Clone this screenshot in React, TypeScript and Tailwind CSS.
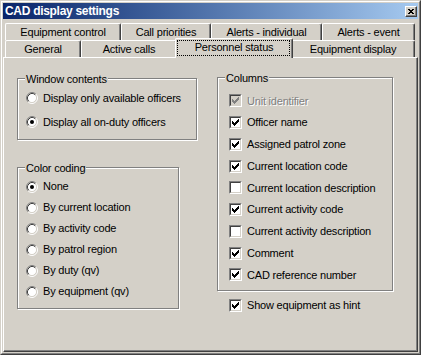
import React from "react";

function Radio({ checked }: { checked?: boolean }) {
  return (
    <svg width="12" height="12" viewBox="0 0 12 12" className="shrink-0">
      <circle cx="6" cy="6" r="4.5" fill="white" />
      <path d="M2.11 9.89 A5.5 5.5 0 0 1 9.89 2.11" fill="none" stroke="#808080" strokeWidth="1" />
      <path d="M9.89 2.11 A5.5 5.5 0 0 1 2.11 9.89" fill="none" stroke="#ffffff" strokeWidth="1" />
      <path d="M2.82 9.18 A4.5 4.5 0 0 1 9.18 2.82" fill="none" stroke="#404040" strokeWidth="1" />
      <path d="M9.18 2.82 A4.5 4.5 0 0 1 2.82 9.18" fill="none" stroke="#D4D0C8" strokeWidth="1" />
      {checked && <circle cx="6" cy="6" r="2" fill="black" />}
    </svg>
  );
}

function CheckMark({ color }: { color: string }) {
  return (
    <svg width="7" height="7" viewBox="0 0 7 7" className="absolute left-[1px] top-[1px]" shapeRendering="crispEdges">
      <path
        d="M0 2h1v3H0z M1 3h1v3H1z M2 4h1v3H2z M3 3h1v3H3z M4 2h1v3H4z M5 1h1v3H5z M6 0h1v3H6z"
        fill={color}
      />
    </svg>
  );
}

function Check({ checked, disabled }: { checked?: boolean; disabled?: boolean }) {
  return (
    <div className="w-[13px] h-[13px] shrink-0 border border-t-[#808080] border-l-[#808080] border-r-white border-b-white">
      <div
        className={
          disabled
            ? "relative w-full h-full border border-t-[#404040] border-l-[#404040] border-r-[#D4D0C8] border-b-[#D4D0C8] bg-[#D4D0C8]"
            : "relative w-full h-full border border-t-[#404040] border-l-[#404040] border-r-[#D4D0C8] border-b-[#D4D0C8] bg-white"
        }
      >
        {checked && <CheckMark color={disabled ? "#808080" : "#000000"} />}
      </div>
    </div>
  );
}

function Group({
  label,
  className,
  children,
}: {
  label: string;
  className: string;
  children: React.ReactNode;
}) {
  return (
    <div
      className={
        "relative border border-[#808080] shadow-[inset_1px_1px_0_white,1px_1px_0_white] " + className
      }
    >
      <span className="absolute left-[7px] top-[-6px] px-[1px] bg-[#D4D0C8] leading-[13px] whitespace-nowrap">
        {label}
      </span>
      {children}
    </div>
  );
}

function Tab({ label, className }: { label: string; className: string }) {
  return (
    <div
      className={
        "h-full flex items-center justify-center rounded-t-[2px] border-l border-t border-r border-l-white border-t-white border-r-[#404040] shadow-[inset_-1px_0_0_#808080] whitespace-nowrap leading-[13px] " +
        className
      }
    >
      {label}
    </div>
  );
}

const radiosTop = ["Display only available officers", "Display all on-duty officers"];
const colorCoding = [
  "None",
  "By current location",
  "By activity code",
  "By patrol region",
  "By duty (qv)",
  "By equipment (qv)",
];
const columns: { label: string; checked: boolean; disabled?: boolean }[] = [
  { label: "Unit identifier", checked: true, disabled: true },
  { label: "Officer name", checked: true },
  { label: "Assigned patrol zone", checked: true },
  { label: "Current location code", checked: true },
  { label: "Current location description", checked: false },
  { label: "Current activity code", checked: true },
  { label: "Current activity description", checked: false },
  { label: "Comment", checked: true },
  { label: "CAD reference number", checked: true },
];

export default function App() {
  return (
    <div className="w-[421px] h-[355px] bg-[#D4D0C8] border border-t-[#D4D0C8] border-l-[#D4D0C8] border-r-[#404040] border-b-[#404040] font-['Liberation_Sans',Arial,sans-serif] text-[11px] tracking-[-0.2px] text-black select-none">
      <div className="h-full flex flex-col p-[1px] border border-t-white border-l-white border-r-[#808080] border-b-[#808080]">
        {/* Title bar */}
        <div className="h-[16px] shrink-0 flex items-center justify-between bg-linear-to-r from-[#0A246A] to-[#A6CAF0]">
          <span className="pl-[2px] text-white font-bold text-[12px] tracking-[-0.3px] leading-[16px]">
            CAD display settings
          </span>
          <div className="mr-[1px] w-[12px] h-[11px] bg-[#D4D0C8] border border-t-white border-l-white border-r-[#404040] border-b-[#404040] shadow-[inset_-1px_-1px_0_#808080] flex items-center justify-center">
            <svg width="6" height="5" viewBox="0 0 6 5" shapeRendering="crispEdges">
              <path d="M0 0h2v1H0z M4 0h2v1H4z M1 1h2v1H1z M3 1h2v1H3z M2 2h2v1H2z M1 3h2v1H1z M3 3h2v1H3z M0 4h2v1H0z M4 4h2v1H4z" fill="black" />
            </svg>
          </div>
        </div>

        {/* Tab rows */}
        <div className="mt-[4px] h-[17px] shrink-0 flex pl-[2px]">
          <Tab label="Equipment control" className="w-[116px]" />
          <Tab label="Call priorities" className="w-[90px]" />
          <Tab label="Alerts - individual" className="w-[111px]" />
          <Tab label="Alerts - event" className="w-[93px]" />
        </div>
        <div className="h-[17px] shrink-0 flex items-end pl-[2px] relative z-10">
          <Tab label="General" className="w-[76px]" />
          <Tab label="Active calls" className="w-[96px]" />
          <div className="relative z-10 w-[118px] h-[20px] -mx-[2px] mb-[-1px] bg-[#D4D0C8] rounded-t-[2px] border-l border-t border-r border-l-white border-t-white border-r-[#404040] shadow-[inset_-1px_0_0_#808080] flex items-center justify-center leading-[13px] whitespace-nowrap">
            <div className="absolute left-[1px] top-[1px] right-[2px] bottom-[2px] border border-dotted border-black" />
            <span className="relative -mt-[2px]">Personnel status</span>
          </div>
          <Tab label="Equipment display" className="w-[124px]" />
        </div>

        {/* Panel */}
        <div className="flex-1 flex items-start border border-t-white border-l-white border-r-[#404040] border-b-[#404040] shadow-[inset_-1px_-1px_0_#808080]">
          <div className="ml-[13px] mt-[20px] flex flex-col">
            <Group label="Window contents" className="w-[180px] h-[62px] pt-[7px]">
              {radiosTop.map((t, i) => (
                <div key={t} className="h-[24px] flex items-center pl-[8px] gap-[5px] whitespace-nowrap">
                  <Radio checked={i === 1} />
                  <span>{t}</span>
                </div>
              ))}
            </Group>
            <Group label="Color coding" className="mt-[27px] w-[162px] h-[142px] pt-[8px]">
              {colorCoding.map((t, i) => (
                <div key={t} className="h-[21px] flex items-center pl-[8px] gap-[5px] whitespace-nowrap">
                  <Radio checked={i === 0} />
                  <span>{t}</span>
                </div>
              ))}
            </Group>
          </div>
          <div className="ml-[20px] mt-[19px] flex flex-col">
            <Group label="Columns" className="w-[176px] h-[214px] pt-[12px]">
              {columns.map((c) => (
                <div key={c.label} className="h-[21.75px] flex items-center pl-[11px] gap-[5px] whitespace-nowrap">
                  <Check checked={c.checked} disabled={c.disabled} />
                  {c.disabled ? (
                    <span className="text-[#808080] [text-shadow:1px_1px_0_white]">{c.label}</span>
                  ) : (
                    <span>{c.label}</span>
                  )}
                </div>
              ))}
            </Group>
            <div className="mt-[3px] h-[22px] flex items-center pl-[12px] gap-[5px] whitespace-nowrap">
              <Check checked />
              <span>Show equipment as hint</span>
            </div>
          </div>
        </div>
      </div>
    </div>
  );
}
